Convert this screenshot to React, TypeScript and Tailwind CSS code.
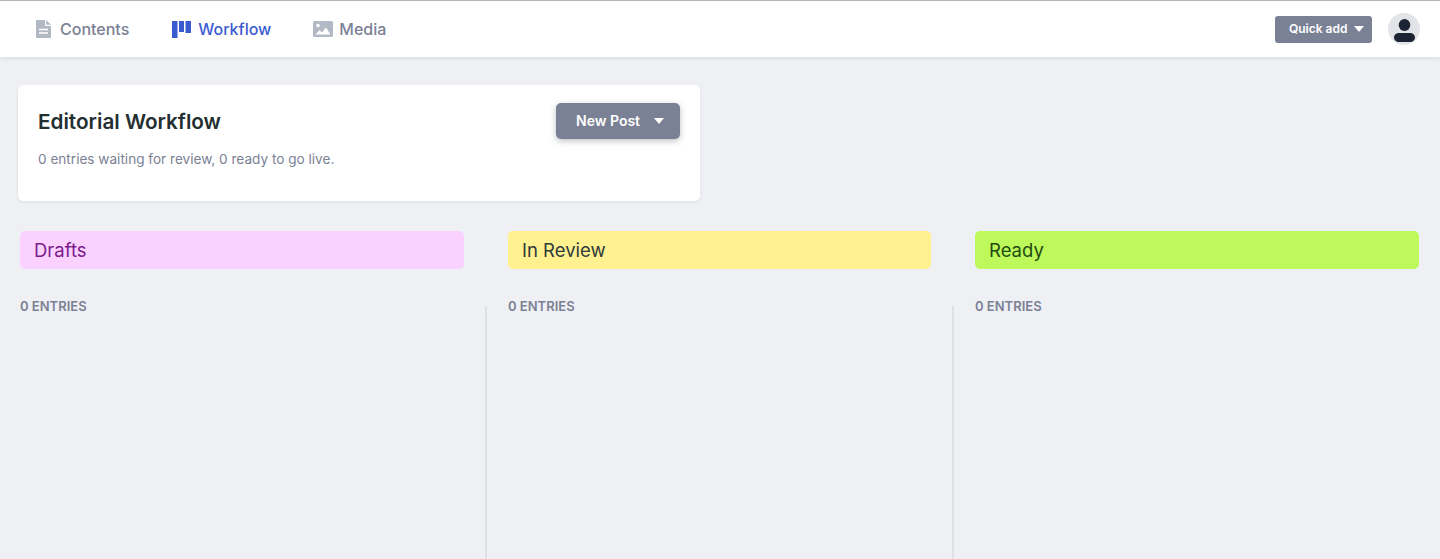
// Editorial workflow board with top nav
import type { ReactNode } from 'react'

function NavItem({ icon, label, className }: { icon: ReactNode; label: string; className: string }) {
  return (
    <a className={`flex items-center text-base font-medium ${className}`}>
      {icon}
      {label}
    </a>
  )
}

function DocIcon() {
  return (
    <svg width="15" height="18" viewBox="0 0 15 18" fill="#b3b9c4">
      <path d="M1 0h8v5.2c0 .5.4.8.8.8H15v11a1 1 0 0 1-1 1H1a1 1 0 0 1-1-1V1a1 1 0 0 1 1-1z" />
      <path d="M10.2 0 15 4.8H10.2z" />
      <path d="M3 8.8h9v1.5H3zM3 12.2h9v1.5H3z" fill="#fff" />
    </svg>
  )
}

function BoardIcon() {
  return (
    <svg width="19" height="17" viewBox="0 0 19 17" fill="#3a5bd0">
      <rect x="0" y="0" width="5.5" height="17" />
      <rect x="7" y="0" width="5" height="11" />
      <rect x="13.5" y="0" width="5.5" height="12" />
    </svg>
  )
}

function ImageIcon() {
  return (
    <svg width="20" height="16" viewBox="0 0 20 16">
      <rect width="20" height="16" rx="1.5" fill="#b3b9c4" />
      <circle cx="5" cy="4.6" r="1.8" fill="#fff" />
      <path d="M2.5 13.5 6.5 9l2.4 2.4L13 6.5l4.5 7z" fill="#fff" />
    </svg>
  )
}

function Caret() {
  return <span className="inline-block border-x-[5px] border-t-[6px] border-x-transparent border-t-white" />
}

function Column({ title, className, wide, divider }: { title: string; className: string; wide: string; divider?: boolean }) {
  return (
    <div className="flex">
      {divider && <div className="mx-[21px] mt-[75px] w-[2px] bg-[#dfe0e6]" />}
      <div className={wide}>
        <div className={`flex h-[38px] items-center rounded-[5px] pl-[14px] text-[18.5px] leading-none ${className}`}>{title}</div>
        <div className="mt-[29px] text-[13px] leading-[16px] font-semibold text-[#7b8195]">0 ENTRIES</div>
      </div>
    </div>
  )
}

export default function App() {
  return (
    <div className="flex h-[559px] flex-col overflow-hidden bg-[#eff0f4] font-['Inter',sans-serif]">
      <header className="flex h-[57px] shrink-0 items-center justify-between border-t border-[#b5b5b5] bg-white pr-[20px] pl-[36px] shadow-[0_1px_4px_rgba(68,74,87,0.15)]">
        <nav className="flex items-center">
          <NavItem icon={<DocIcon />} label="Contents" className="gap-[9px] text-[#7b8195]" />
          <NavItem icon={<BoardIcon />} label="Workflow" className="ml-[43px] gap-[7px] text-[#3a5bd0]" />
          <NavItem icon={<ImageIcon />} label="Media" className="ml-[42px] gap-[6px] text-[#7b8195]" />
        </nav>
        <div className="flex items-center gap-[16px]">
          <button className="flex h-[27px] w-[97px] items-center gap-[7px] rounded-[3px] bg-[#7b8195] pl-[14px] text-xs font-semibold text-white">
            Quick add
            <Caret />
          </button>
          <div className="flex size-[32px] items-center justify-center rounded-full bg-[#e3e4e8]">
            <svg className="mt-[3px]" width="21" height="23" viewBox="0 0 21 23" fill="#1d2433">
              <ellipse cx="10.5" cy="6" rx="5.8" ry="6" />
              <path d="M5 14h11c2.8 0 5 1.9 5 4.5S18.8 23 16 23H5c-2.8 0-5-1.900-5-4.500S2.200 14 5 14z" />
            </svg>
          </div>
        </div>
      </header>

      <main className="flex flex-1 flex-col">
        <section className="mt-[28px] ml-[18px] flex h-[116px] w-[682px] items-start justify-between rounded-[5px] bg-white pt-[18px] pr-[20px] pl-[20px] shadow-[0_1px_3px_rgba(68,74,87,0.12)]">
          <div>
            <h1 className="mt-[6px] text-[20.7px] leading-[26px] font-semibold text-[#232f30]">Editorial Workflow</h1>
            <p className="mt-[14px] text-[13.6px] leading-[20px] text-[#7b8195]">0 entries waiting for review, 0 ready to go live.</p>
          </div>
          <button className="flex h-[36px] w-[124px] items-center gap-[14px] rounded-[5px] bg-[#7b8195] pl-[20px] text-sm font-semibold text-white shadow-[0_2px_6px_rgba(68,74,87,0.35)]">
            New Post
            <Caret />
          </button>
        </section>

        <div className="mt-[30px] ml-[20px] flex flex-1">
          <Column title="Drafts" className="bg-[#fbd2ff] text-[#7c1b8a]" wide="w-[444px]" />
          <Column title="In Review" className="bg-[#fff18f] text-[#2f3a3d]" wide="w-[423px]" divider />
          <Column title="Ready" className="bg-[#bdf95a] text-[#1f4a10]" wide="w-[444px]" divider />
        </div>
      </main>
    </div>
  )
}
